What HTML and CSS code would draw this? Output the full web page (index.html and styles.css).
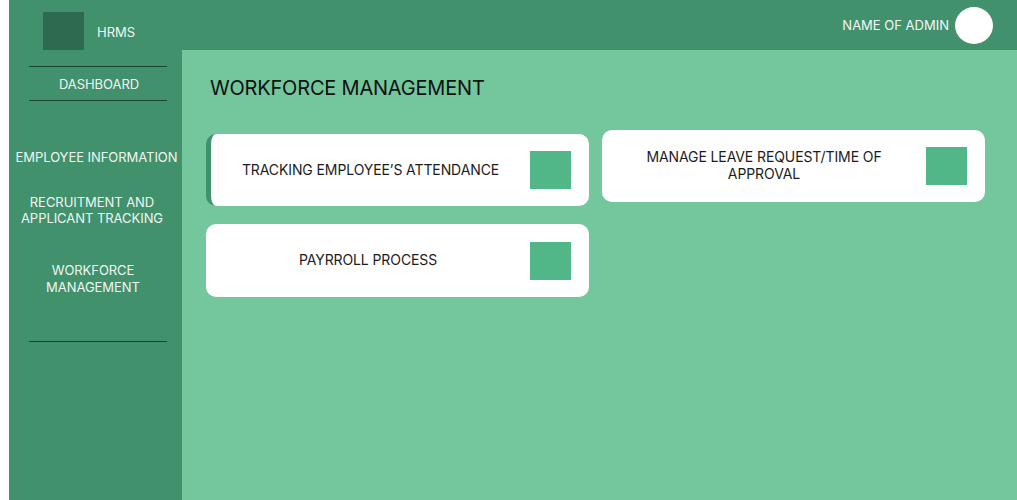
FILE: index.html
```html
<!DOCTYPE html>
<html lang="en">
<head>
<meta charset="utf-8">
<title>HRMS - Workforce Management</title>
<link rel="stylesheet" href="styles.css">
</head>
<body>
<div class="app">
  <aside class="sidebar">
    <div class="brand">
      <div class="brand-logo"></div>
      <span class="brand-name">HRMS</span>
    </div>
    <nav class="nav">
      <div class="nav-dashboard">DASHBOARD</div>
      <div class="nav-item nav-employee">EMPLOYEE INFORMATION</div>
      <div class="nav-item nav-recruit">RECRUITMENT AND<br>APPLICANT TRACKING</div>
      <div class="nav-item nav-workforce">WORKFORCE<br>MANAGEMENT</div>
      <div class="nav-rule"></div>
    </nav>
  </aside>
  <header class="topbar">
    <span class="admin-name">NAME OF ADMIN</span>
    <span class="avatar"></span>
  </header>
  <main class="main">
    <h1 class="title">WORKFORCE MANAGEMENT</h1>
    <div class="cards">
      <div class="card card--active">
        <div class="card-text">TRACKING EMPLOYEE’S ATTENDANCE</div>
        <div class="card-icon"></div>
      </div>
      <div class="card">
        <div class="card-text">MANAGE LEAVE REQUEST/TIME OF APPROVAL</div>
        <div class="card-icon"></div>
      </div>
      <div class="card card--tall">
        <div class="card-text">PAYRROLL PROCESS</div>
        <div class="card-icon"></div>
      </div>
    </div>
  </main>
</div>
</body>
</html>
```

FILE: styles.css
```css
* { box-sizing: border-box; }

html, body { height: 100%; }

body {
  margin: 0 0 0 9px;
  background: #ffffff;
  font-family: Inter, "Noto Sans", "Liberation Sans", sans-serif;
  overflow: hidden;
}

.app {
  display: grid;
  grid-template-columns: 173px 1fr;
  grid-template-rows: 50px 1fr;
  height: 500px;
}

.sidebar {
  grid-column: 1;
  grid-row: 1 / span 2;
  background: #40916c;
  color: #f1f6f3;
  padding-top: 12px;
}

.brand {
  display: flex;
  align-items: center;
  padding-left: 34px;
  gap: 13px;
}

.brand-logo {
  width: 41px;
  height: 38px;
  background: #2d6a4f;
}

.brand-name {
  font-size: 13px;
  line-height: 16px;
  margin-top: 2px;
}

.nav {
  display: flex;
  flex-direction: column;
  font-size: 13px;
  line-height: 16px;
  text-align: center;
  letter-spacing: -0.05px;
}

.nav-dashboard {
  margin: 16px 15px 0 20px;
  height: 35px;
  border-top: 1px solid #1b4332;
  border-bottom: 1px solid #1b4332;
  display: flex;
  align-items: center;
  justify-content: center;
  padding-left: 2px;
}

.nav-employee {
  margin-top: 48px;
  padding-left: 2px;
}

.nav-recruit {
  margin-top: 29px;
  padding-right: 7px;
}

.nav-workforce {
  margin-top: 36px;
  line-height: 17px;
  padding-right: 5px;
}

.nav-rule {
  margin: 45px 15px 0 20px;
  height: 1px;
  background: #1b4332;
}

.topbar {
  grid-column: 2;
  grid-row: 1;
  background: #40916c;
  display: flex;
  align-items: center;
  justify-content: flex-end;
  gap: 6px;
  padding-right: 24px;
}

.admin-name {
  color: #f4f8f6;
  font-size: 13px;
  line-height: 16px;
}

.avatar {
  width: 38px;
  height: 37px;
  border-radius: 50%;
  background: #ffffff;
}

.main {
  grid-column: 2;
  grid-row: 2;
  background: #74c69d;
  padding: 26px 24px 0 24px;
}

.title {
  margin: 0 0 30px 4px;
  font-size: 20px;
  line-height: 24px;
  font-weight: 400;
  color: #111111;
  letter-spacing: -0.2px;
}

.cards {
  display: grid;
  grid-template-columns: 383px 383px;
  column-gap: 13px;
  row-gap: 18px;
  align-items: start;
}

.card {
  background: #ffffff;
  border-radius: 10px;
  height: 72px;
  display: flex;
  align-items: center;
  padding-right: 18px;
}

.card--active {
  margin-top: 4px;
  border-left: 5px solid #40916c;
}

.card--tall {
  height: 73px;
}

.card-text {
  flex: 1;
  text-align: center;
  padding: 0 22px 2px 22px;
  font-size: 14px;
  line-height: 17px;
  color: #1c1c1c;
  letter-spacing: -0.1px;
}

.card-icon {
  width: 41px;
  height: 38px;
  background: #52b788;
  flex-shrink: 0;
}
```
